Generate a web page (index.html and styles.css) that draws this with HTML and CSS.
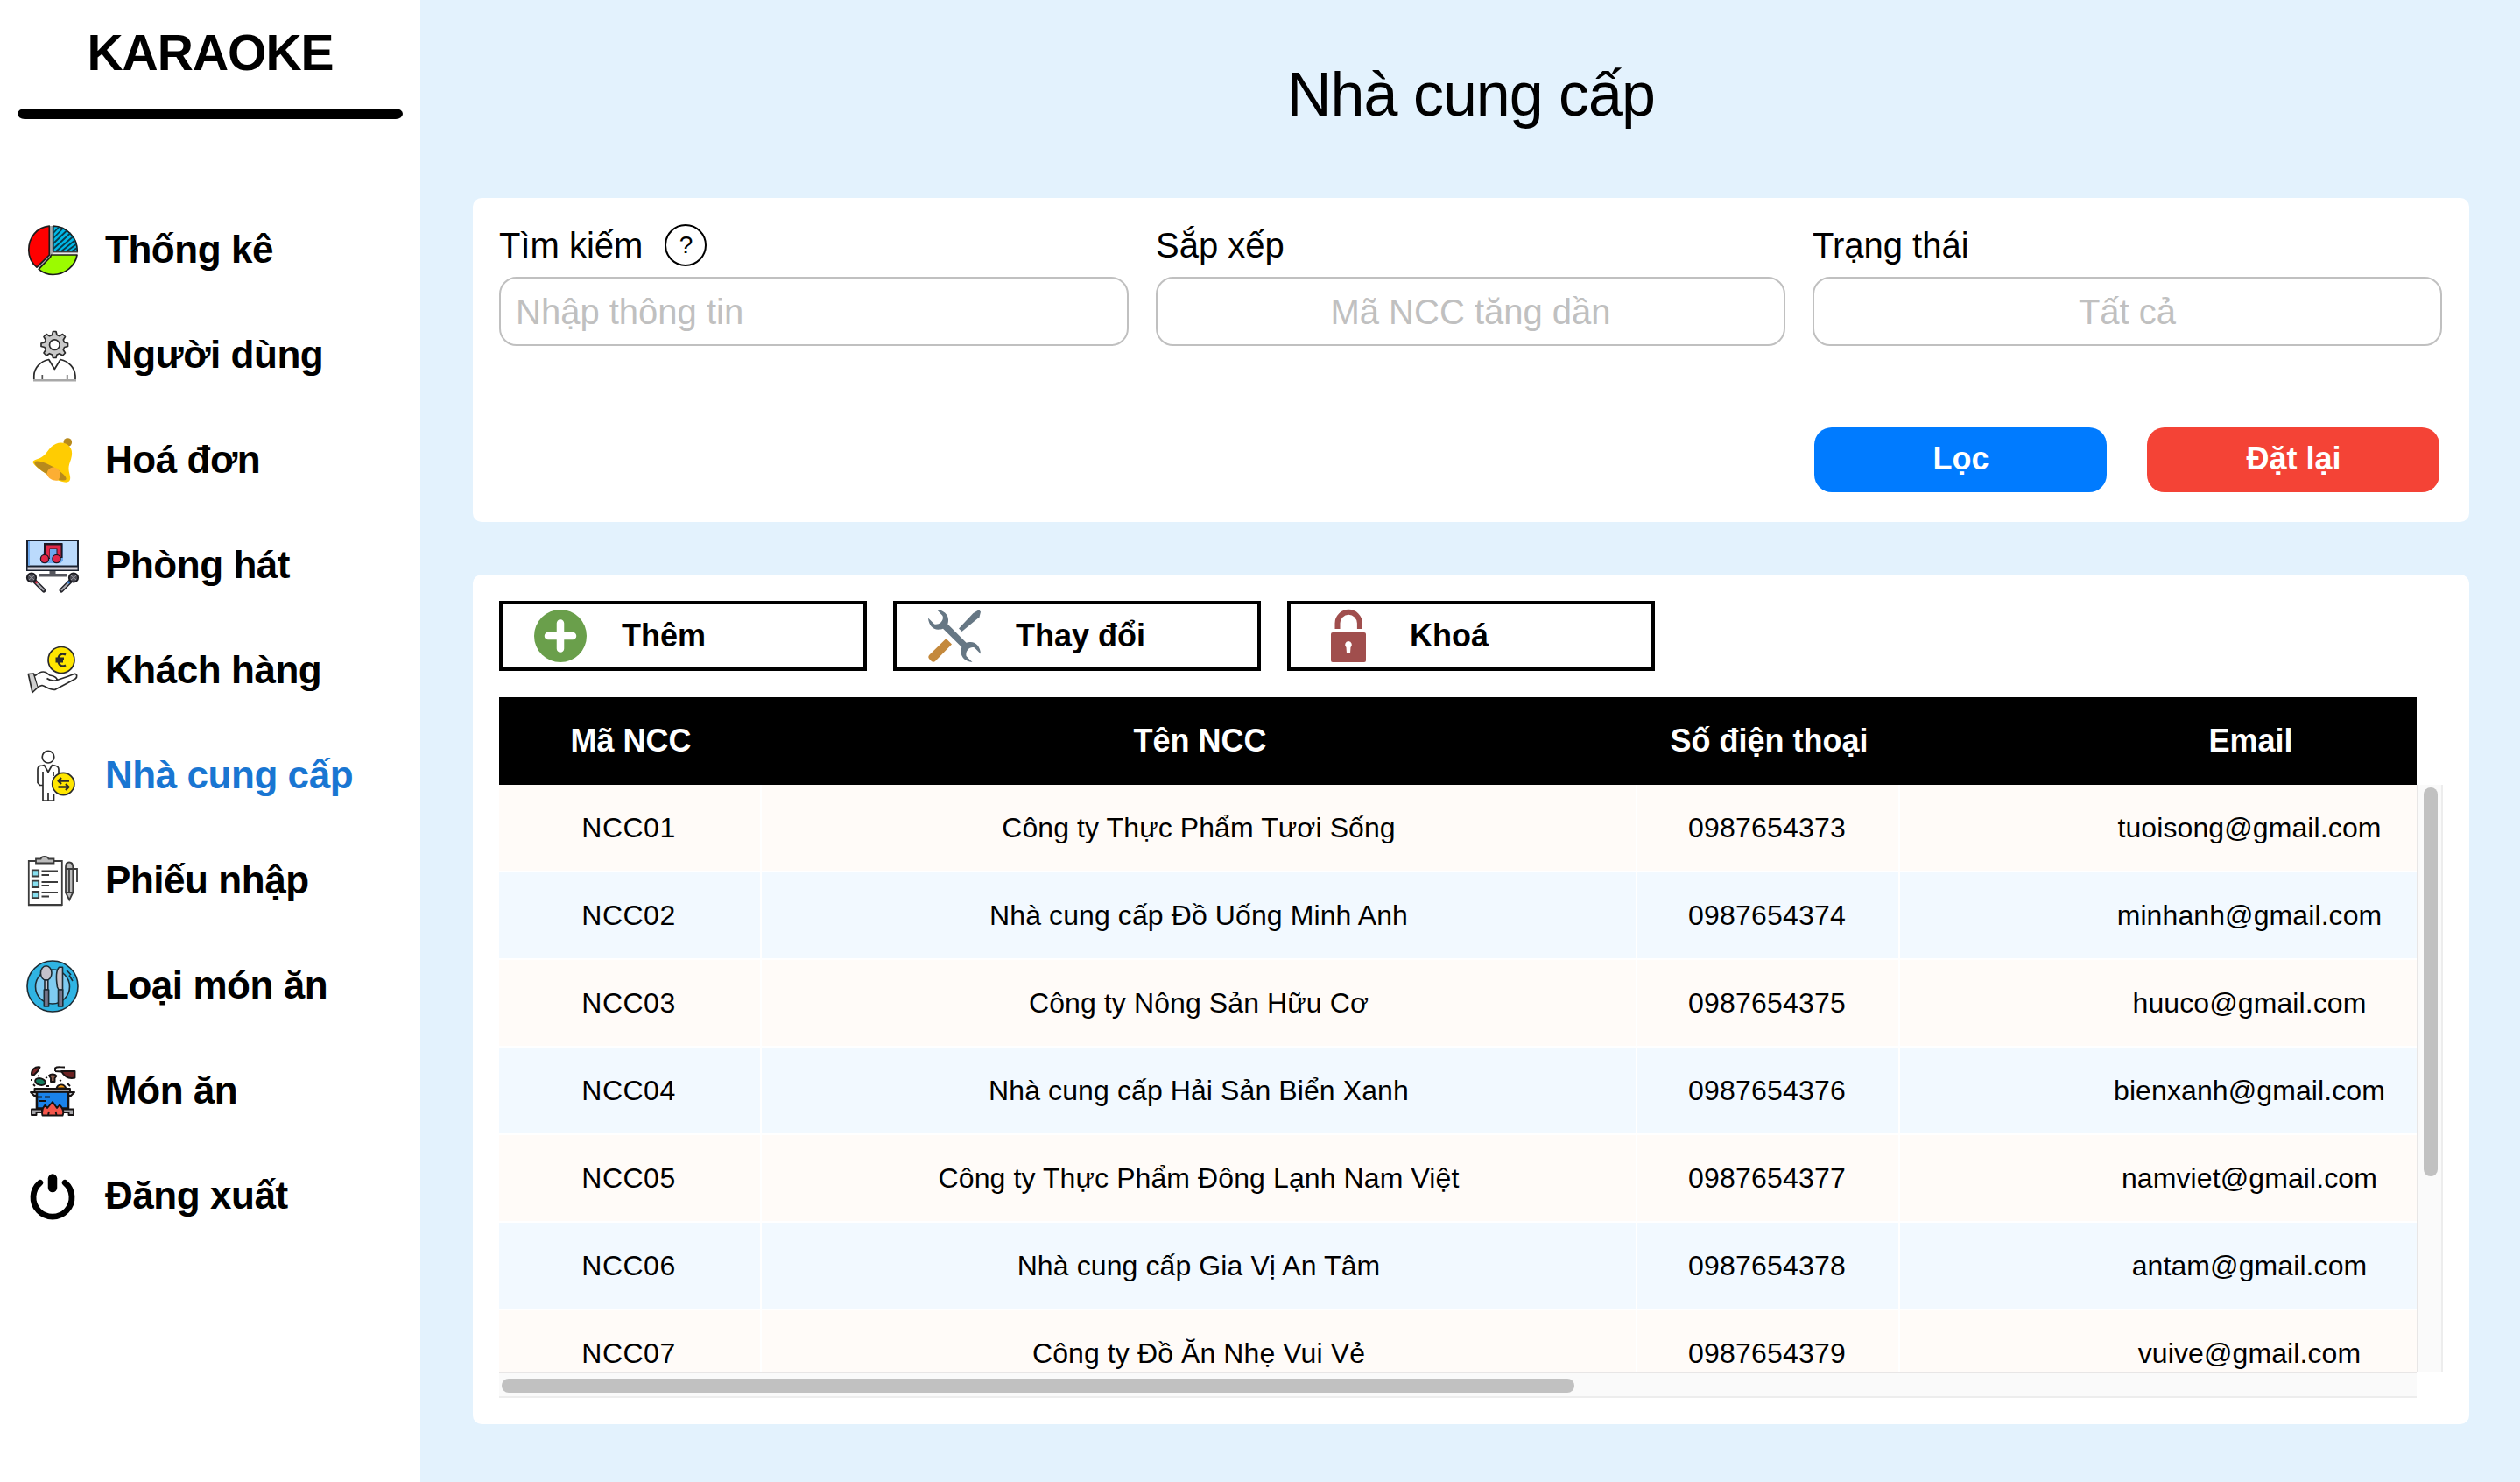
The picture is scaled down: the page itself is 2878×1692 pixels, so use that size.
FILE: index.html
```html
<!DOCTYPE html>
<html lang="vi">
<head>
<meta charset="utf-8">
<title>Karaoke - Nhà cung cấp</title>
<link rel="stylesheet" href="styles.css">
</head>
<body>
<aside class="sidebar">
  <div class="brand">KARAOKE</div>
  <div class="brand-rule"></div>
  <nav class="menu">
    <a class="menu-item">
      <svg class="icon" viewBox="0 0 60 60" stroke="#1c1c1c" stroke-width="1.7" stroke-linejoin="round">
        <path d="M28.6 2V33L14.5 50M31 31.8H59" fill="none" stroke="#aaa" stroke-width="3"/>
        <path d="M26.3 2.2C12 3.5 2.8 15 2.8 29.5C2.8 37 6.500 44.500 12 49.200L26.300 35.200Z" fill="#f00"/>
        <path d="M28.500 35H58C56 47.500 44.500 57.500 30.500 57.500C24.500 57.500 18.500 55 14.200 51.400L27.500 37.500Z" fill="#9bfb00"/>
        <path d="M30.700 2.200C46 2.500 58.300 15 58.300 31H30.700Z" fill="#00b8e6"/>
        <path d="M31 10L37 3.500M31 16L42 4.500M31 22L46.500 7M31 28L50.500 10M34 31L53.500 14M40 31L56 18M46 31L57.500 22.500M52 31L58 27" fill="none" stroke="#0a3a4a" stroke-width="1.800"/>
      </svg>
      <span>Thống kê</span>
    </a>
    <a class="menu-item">
      <svg class="icon" viewBox="0 0 60 60" fill="none" stroke="#2a2a2a" stroke-width="1.700" stroke-linejoin="round">
        <path fill="#c9c9c9" d="M30.500 2.500H34L35 6.500L38 7.700L41.500 5.500L44.500 8.500L42.300 12L43.500 15L47.500 16V19.500L43.500 20.500L42.300 23.500L44.500 27L41.500 30L38 27.700L35 29L34 32.500H30.500L29.500 29L26.500 27.700L23 30L20 27L22.200 23.500L21 20.500L17 19.500V16L21 15L22.200 12L20 8.500L23 5.500L26.500 7.700L29.500 6.500Z"/>
        <circle cx="32.300" cy="17.700" r="5.800" fill="#fff"/>
        <path d="M8.800 57.500V53C9 44 16 36.500 25.700 34.500L32.300 45.500L39 34.500C48.500 36.500 55.500 44 56 53V57.500"/>
        <path d="M18.300 52V57M46.700 52V57" stroke="#555"/>
        <path d="M8 58.300H57" stroke="#a8a8a8" stroke-width="2.400"/>
      </svg>
      <span>Người dùng</span>
    </a>
    <a class="menu-item">
      <svg class="icon" viewBox="0 0 60 60">
        <circle cx="47.300" cy="9" r="4.800" fill="#b88a1c"/>
        <path fill="#ffcc02" d="M7.300 31.500C8 29.500 10 29 13 28C19 26 22.500 22 26 17C30.500 11 38 7.500 45 10.500C52 14 53.500 20 51 28.500C48.500 35 47.500 39 49.500 45.500C50.800 50 50.500 54.500 46.500 54.600C42 55 32 52 22 44.500C14 39 8.500 35 7.300 31.500Z"/>
        <ellipse cx="27.500" cy="41.500" rx="20.500" ry="5.500" transform="rotate(29 27.500 41.500)" fill="#b88a1c"/>
        <path fill="#fcae33" d="M25.500 40C28 36.500 34 36.500 37 40.500C40.500 45 38.500 50 36 52.500C31 53.500 26 50.500 24 47C23 44 24 42 25.500 40Z"/>
      </svg>
      <span>Hoá đơn</span>
    </a>
    <a class="menu-item">
      <svg class="icon" viewBox="0 0 60 60">
        <path fill="#1b2230" d="M0 0H60V36H0Z"/>
        <path fill="#bbdafc" d="M2 2H58V29.500H2Z"/>
        <path fill="#6da9ee" d="M2 2H4V29.500H2ZM17 27L20 12L22 5H42V24L39 27Z"/>
        <path fill="#d5d2da" d="M1.500 31.500H58.500V34.500H1.500Z"/>
        <path fill="none" stroke="#1d1622" stroke-width="7" d="M23.500 22V7.500H38V21"/>
        <path fill="none" stroke="#e2284a" stroke-width="4" d="M24.500 21V8.500H37.500V20"/>
        <g fill="#e2284a" stroke="#1d1622" stroke-width="1.300"><circle cx="21" cy="22" r="4.600"/><circle cx="34.500" cy="22" r="4.600"/></g>
        <path fill="#55565e" d="M26.500 36H33.500V39H46V42.500H14V39H26.500Z"/>
        <g fill="none" stroke-linecap="round"><path d="M10 48L20 58M50 48L40 58" stroke="#26262c" stroke-width="5"/><path d="M12 50L19.500 57.500M48 50L40.500 57.500" stroke="#a9a9b0" stroke-width="2"/></g>
        <g fill="#4b4b54" stroke="#1c1c22" stroke-width="1.800"><circle cx="6" cy="43.500" r="5.200"/><circle cx="54" cy="43.500" r="5.200"/></g>
        <path d="M3 41L9 46M3 46L9 41M51 41L57 46M51 46L57 41" stroke="#9a9aa2" stroke-width="1"/>
        <circle cx="11.500" cy="49" r="1.400" fill="#d9304c"/><circle cx="48.500" cy="49" r="1.400" fill="#2f7fd8"/>
      </svg>
      <span>Phòng hát</span>
    </a>
    <a class="menu-item">
      <svg class="icon" viewBox="0 0 60 60" fill="none" stroke="#2b2b2b" stroke-width="1.700" stroke-linejoin="round">
        <circle cx="40" cy="17.500" r="15" fill="#ffe600"/>
        <path d="M45 11.500C40.500 9 36.500 11.500 36.500 17.500C36.500 23.500 40.500 26 45 23.500M33.500 15.700H43M33.500 19.300H42" stroke-width="2.400"/>
        <path d="M2.300 33.500L8.500 33L13.500 48.500L7 54.500Z" fill="#d0d0d0"/>
        <path fill="#fff" d="M10 35.500C14 32 18 30 22 31.500L27 35C32 36 35.500 37.500 35 40.500L47 36.500L54.500 33.500C58.500 33 58.500 37 56 39L44 45.500L33 51.300C28 52.500 23 48 18 46.500L13.500 48"/>
        <path d="M35 40.500C32 41.500 27 41 23.500 38.500"/>
      </svg>
      <span>Khách hàng</span>
    </a>
    <a class="menu-item active">
      <svg class="icon" viewBox="0 0 60 60" fill="none" stroke="#2b2b2b" stroke-width="1.700" stroke-linejoin="round">
        <circle cx="25" cy="8.200" r="6.800"/>
        <path d="M19 58V25M19 40.500H15.500L13 37.500V22.500C13 19.500 15 18 18.500 18L20.500 17.500L25 25.500L29.500 17.500L32.500 18C35.500 18.500 37 20 37 22.500V27M18.500 58H31.500V50M25 49V58M31 25V30"/>
        <circle cx="42.300" cy="39" r="12.600" fill="#ffe600"/>
        <path d="M49 35.500H37M40 32L36.500 35.500L40 39M36.500 42.500H47.500M45 39L48.500 42.500L45 46" stroke-width="2.300"/>
      </svg>
      <span>Nhà cung cấp</span>
    </a>
    <a class="menu-item">
      <svg class="icon" viewBox="0 0 60 60" fill="none" stroke="#3b3b3b" stroke-width="1.800">
        <path d="M2.800 7H40.800V57H2.800Z"/>
        <path d="M2 58.800H41" stroke="#c8c8c8"/>
        <path d="M11 9.500V4.500H16.500C17.500 1 24 1 25.500 4.500H31.500V9.500Z" fill="#bdbdbd"/>
        <g fill="#86deee"><path d="M6.800 17.300H14.200V24.500H6.800ZM6.800 29.700H14.200V37H6.800ZM6.800 42H14.200V49.200H6.800Z"/></g>
        <path d="M17.500 18.500H36M17.500 23H26M17.500 31H36M17.500 35H26M17.500 43H36M17.500 47.500H26"/>
        <path d="M45 14C45 10 46.500 8.500 49 8.500C51.500 8.500 53.300 10 53.300 14V43L49.200 51.500L45 43Z" fill="#bdbdbd"/>
        <path d="M45 43H53.300M45 16H58V31M49 16V42"/>
      </svg>
      <span>Phiếu nhập</span>
    </a>
    <a class="menu-item">
      <svg class="icon" viewBox="0 0 60 60" stroke="#1d2b33" stroke-width="1.600" stroke-linejoin="round">
        <circle cx="30" cy="30" r="29" fill="#2fb4e3"/>
        <circle cx="30" cy="30.500" r="19.500" fill="#7fcbf1"/>
        <ellipse cx="22.700" cy="15" rx="6.300" ry="8.300" fill="#c5c2cb"/>
        <path d="M21 23H24.800V34H21ZM35.500 31C34 22 34 12 37.500 8.300H41.500V34H37Z" fill="#c5c2cb"/>
        <path d="M20.300 34H25.600V53H20.300ZM36.500 34H41.800V53H36.500Z" fill="#77758a"/>
        <path d="M46 11.500L51 17M49 17.500L53 24M54 20L54.500 21M52.500 27V28" fill="none"/>
      </svg>
      <span>Loại món ăn</span>
    </a>
    <a class="menu-item">
      <svg class="icon" viewBox="0 0 60 60" stroke="#171313" stroke-width="1.900" stroke-linejoin="round">
        <path d="M6 11C5.500 5 10 1.500 15.500 2.500L13 7L8.500 11.500Z" fill="#7c2929"/>
        <path d="M33 7V3.500C35 1.500 38 2.500 44 2.500M33 7L40 7.500" fill="none"/>
        <path d="M40 7H55.500V14.500C49 16 44 14 40 7Z" fill="#6c2222"/>
        <ellipse cx="16" cy="19" rx="6" ry="3.800" fill="#127b5c" transform="rotate(15 16 19)"/>
        <path d="M26 12C28 10 33 10 34.500 12.500L32.500 15V19H28V15Z" fill="#8a5d4c"/>
        <path d="M34.500 26.500C36 21.500 43 20.500 45.500 26.500Z" fill="#f59a16"/>
        <path d="M5 17H6M8 22L10 24M13 12L15 13M22 15L24 14M38 17L40 18M47 21L50 24M54 19H55M22 24H26" fill="none"/>
        <path d="M5 31H12V35H9ZM55 31H48V35H51Z" fill="#c4c4c8"/>
        <path d="M12 30H48V49.500H12Z" fill="#1a82ea" stroke-width="2.600"/>
        <path d="M9.500 27H50V30.700H9.500Z" fill="#c4c4c8"/>
        <path d="M12 36.500H18M21 36.500H27M14 41H23" fill="none"/>
        <path d="M6 57V50.500H18V54H11.500V57ZM54 57V50.500H42V54H48.500V57Z" fill="#a7a7ab"/>
        <path d="M18.500 57.500C17 52 19 48.500 21.500 45.500L24 49L30 42L35 49L38 45.500C41.500 49 43.500 53 41.500 57.500Z" fill="#f4564b"/>
        <path d="M25 57L26 53M34.500 57L33.500 53" fill="none"/>
      </svg>
      <span>Món ăn</span>
    </a>
    <a class="menu-item">
      <svg class="icon" viewBox="0 0 60 60" fill="none" stroke="#000" stroke-linecap="round">
        <path d="M15.800 14.300A22 22 0 1 0 44.200 14.300" stroke-width="6.800"/>
        <path d="M30 9.600V20" stroke-width="10.500"/>
      </svg>
      <span>Đăng xuất</span>
    </a>
  </nav>
</aside>

<main class="main">
  <h1 class="title">Nhà cung cấp</h1>

  <section class="panel filters">
    <div class="fields">
      <div class="field">
        <div class="label">Tìm kiếm <span class="help">?</span></div>
        <div class="input">Nhập thông tin</div>
      </div>
      <div class="field">
        <div class="label">Sắp xếp</div>
        <div class="input select">Mã NCC tăng dần</div>
      </div>
      <div class="field">
        <div class="label">Trạng thái</div>
        <div class="input select">Tất cả</div>
      </div>
    </div>
    <div class="actions">
      <button class="btn primary">Lọc</button>
      <button class="btn danger">Đặt lại</button>
    </div>
  </section>

  <section class="panel list">
    <div class="toolbar">
      <button class="tool">
        <svg class="icon" viewBox="0 0 60 60"><circle cx="30" cy="30" r="30" fill="#6a9f4b"/><path d="M30 15.500V44.500M16 30H44" stroke="#fff" stroke-width="8.500" stroke-linecap="round"/></svg>
        <span>Thêm</span>
      </button>
      <button class="tool">
        <svg class="icon" viewBox="0 0 60 60">
          <path fill="#667784" d="M9.900 0C17 .5 23 5 23 11.500C23 13.500 22.800 15 22.300 16.500L43.500 37.700C45 37.200 46.500 37 48.500 37C55 37 59.500 42.500 60 50.500L53 43.500C50.500 42.500 47 43.500 45.500 45.500C43.500 47.500 43 50.500 43.500 53L50.500 60C42.500 59.500 37.500 54 37.500 48.500C37.500 46.500 37.700 44.500 38.300 42.800L17 21.800C15 22.500 13.500 22.700 11.500 22.700C5 22.700 .5 17 0 9.500L7 16.500C9.500 17 12.500 16.500 14.500 14.500C16.500 12.500 17.500 9.500 16.500 7Z"/>
          <path fill="#667784" d="M58 .3L60 2.500L58.500 8.500L38.500 25L35 21.500L51.500 4Z"/>
          <path fill="#c4893c" d="M20.500 33L27 39.500L8.500 58.500C6.500 60.500 4.500 60 2.500 57.500C0 55.500 -.5 53.500 1.500 51.500Z"/>
        </svg>
        <span>Thay đổi</span>
      </button>
      <button class="tool">
        <svg class="icon" viewBox="0 0 60 60"><path d="M17.300 22V15.500A12.700 12.700 0 0 1 42.700 15.500V22" transform="translate(.2 0)" fill="none" stroke="#a04e4d" stroke-width="6"/><rect x="10" y="26" width="40" height="34" rx="2" fill="#a04e4d"/><path d="M30 36A4 4 0 0 1 32.500 43L32 50H28L27.500 43A4 4 0 0 1 30 36Z" fill="#fff"/></svg>
        <span>Khoá</span>
      </button>
    </div>

    <div class="grid">
      <div class="thead row"><div>Mã NCC</div><div>Tên NCC</div><div>Số điện thoại</div><div>Email</div></div>
      <div class="tbody">
        <div class="row"><div class="code">NCC01</div><div>Công ty Thực Phẩm Tươi Sống</div><div class="phone">0987654373</div><div>tuoisong@gmail.com</div></div>
        <div class="row"><div class="code">NCC02</div><div>Nhà cung cấp Đồ Uống Minh Anh</div><div class="phone">0987654374</div><div>minhanh@gmail.com</div></div>
        <div class="row"><div class="code">NCC03</div><div>Công ty Nông Sản Hữu Cơ</div><div class="phone">0987654375</div><div>huuco@gmail.com</div></div>
        <div class="row"><div class="code">NCC04</div><div>Nhà cung cấp Hải Sản Biển Xanh</div><div class="phone">0987654376</div><div>bienxanh@gmail.com</div></div>
        <div class="row"><div class="code">NCC05</div><div>Công ty Thực Phẩm Đông Lạnh Nam Việt</div><div class="phone">0987654377</div><div>namviet@gmail.com</div></div>
        <div class="row"><div class="code">NCC06</div><div>Nhà cung cấp Gia Vị An Tâm</div><div class="phone">0987654378</div><div>antam@gmail.com</div></div>
        <div class="row"><div class="code">NCC07</div><div>Công ty Đồ Ăn Nhẹ Vui Vẻ</div><div class="phone">0987654379</div><div>vuive@gmail.com</div></div>
      </div>
      <div class="vbar"><div class="vthumb"></div></div>
      <div class="hbar"><div class="hthumb"></div></div>
    </div>
  </section>
</main>
</body>
</html>
```

FILE: styles.css
```css
* { box-sizing: border-box; }

body {
  margin: 0;
  width: 2878px;
  height: 1692px;
  display: flex;
  overflow: hidden;
  background: #e3f2fd;
  color: #000;
  font-family: "Liberation Sans", Arial, sans-serif;
}

button { font-family: inherit; margin: 0; padding: 0; }

.icon { width: 60px; height: 60px; flex: none; display: block; overflow: visible; }

/* Sidebar */
.sidebar {
  width: 480px;
  flex: none;
  display: flex;
  flex-direction: column;
  background: #fff;
  font-weight: bold;
}

.brand {
  height: 124px;
  line-height: 120px;
  text-align: center;
  font-size: 57px;
  letter-spacing: -1px;
}

.brand-rule {
  height: 12px;
  margin: 0 20px 90px;
  border-radius: 8px / 6px;
  background: #000;
}

.menu-item {
  display: flex;
  align-items: center;
  gap: 30px;
  height: 120px;
  padding-left: 30px;
  font-size: 44px;
  letter-spacing: -0.45px;
}

.menu-item span { padding-bottom: 2px; }

.active { color: #1976d2; }

/* Content */
.main {
  flex: 1;
  display: flex;
  flex-direction: column;
  padding: 0 58px 66px 60px;
}

.title {
  height: 226px;
  margin: 0;
  padding-bottom: 10px;
  line-height: 216px;
  text-align: center;
  font-size: 70px;
  font-weight: normal;
  letter-spacing: -1px;
}

.panel {
  width: 2280px;
  border-radius: 10px;
  background: #fff;
  padding: 30px;
}

.filters { height: 370px; margin-bottom: 60px; }

.fields { display: flex; gap: 30px; }

.field { width: 720px; }

.label {
  display: flex;
  align-items: center;
  gap: 25px;
  height: 48px;
  margin-bottom: 12px;
  font-size: 40px;
  line-height: 48px;
}

.help {
  width: 48px;
  height: 48px;
  border: 2px solid #000;
  border-radius: 50%;
  font-size: 28px;
  line-height: 44px;
  text-align: center;
}

.input {
  width: 719px;
  height: 79px;
  border: 2px solid #c0c0c0;
  border-radius: 20px;
  padding: 0 17px;
  color: #c0c0c0;
  font-size: 40px;
  line-height: 76px;
}

.select { text-align: center; }

.actions {
  display: flex;
  justify-content: flex-end;
  gap: 46px;
  margin-top: 93px;
  padding-right: 4px;
}

.btn {
  width: 334px;
  height: 74px;
  border: 0;
  border-radius: 20px;
  padding: 0 0 3px 1px;
  color: #fff;
  font-size: 36px;
  font-weight: bold;
}

.primary { background: #007bff; }
.danger { background: #f44336; }

.list { height: 970px; }

.toolbar { display: flex; gap: 30px; margin-bottom: 30px; }

.tool {
  display: flex;
  align-items: center;
  gap: 40px;
  width: 420px;
  height: 80px;
  border: 4px solid #000;
  padding-left: 36px;
  background: #fff;
  color: #000;
  font-size: 36px;
  font-weight: bold;
}

/* Table with its scrollbars */
.grid {
  display: grid;
  grid-template-columns: 2190px 30px;
  grid-template-rows: 100px 670px 30px;
}

.row {
  display: grid;
  grid-template-columns: 300px 1000px 300px 800px;
  height: 100px;
  line-height: 98px;
  text-align: center;
}

.thead {
  grid-column: 1;
  overflow: hidden;
  background: #000;
  color: #fff;
  font-size: 36px;
  font-weight: bold;
  line-height: 99px;
}

.thead > div { padding-left: 1px; }

.tbody {
  grid-column: 1;
  overflow: hidden;
  font-size: 32px;
  letter-spacing: 0.1px;
}

.tbody .row > div {
  border-right: 2px solid #fff;
  border-bottom: 2px solid #fff;
  background: #fffbf8;
}

.tbody .row:nth-child(even) > div { background: #f2f9ff; }

.tbody .code { padding-right: 2px; letter-spacing: 0.5px; }
.tbody .phone { padding-right: 2px; letter-spacing: 0.2px; }

.vbar {
  grid-column: 2;
  border-left: 2px solid #e8e6e6;
  border-right: 2px solid #ededed;
  padding: 3px 4px 0 6px;
  background: #fafafa;
}

.vthumb { width: 16px; height: 444px; border-radius: 8px; background: #c1c1c1; }

.hbar {
  grid-column: 1;
  border-top: 2px solid #e8e6e6;
  border-bottom: 2px solid #ededed;
  padding: 6px 0 0 3px;
  background: #fafafa;
}

.hthumb { width: 1225px; height: 16px; border-radius: 8px; background: #c1c1c1; }
```
